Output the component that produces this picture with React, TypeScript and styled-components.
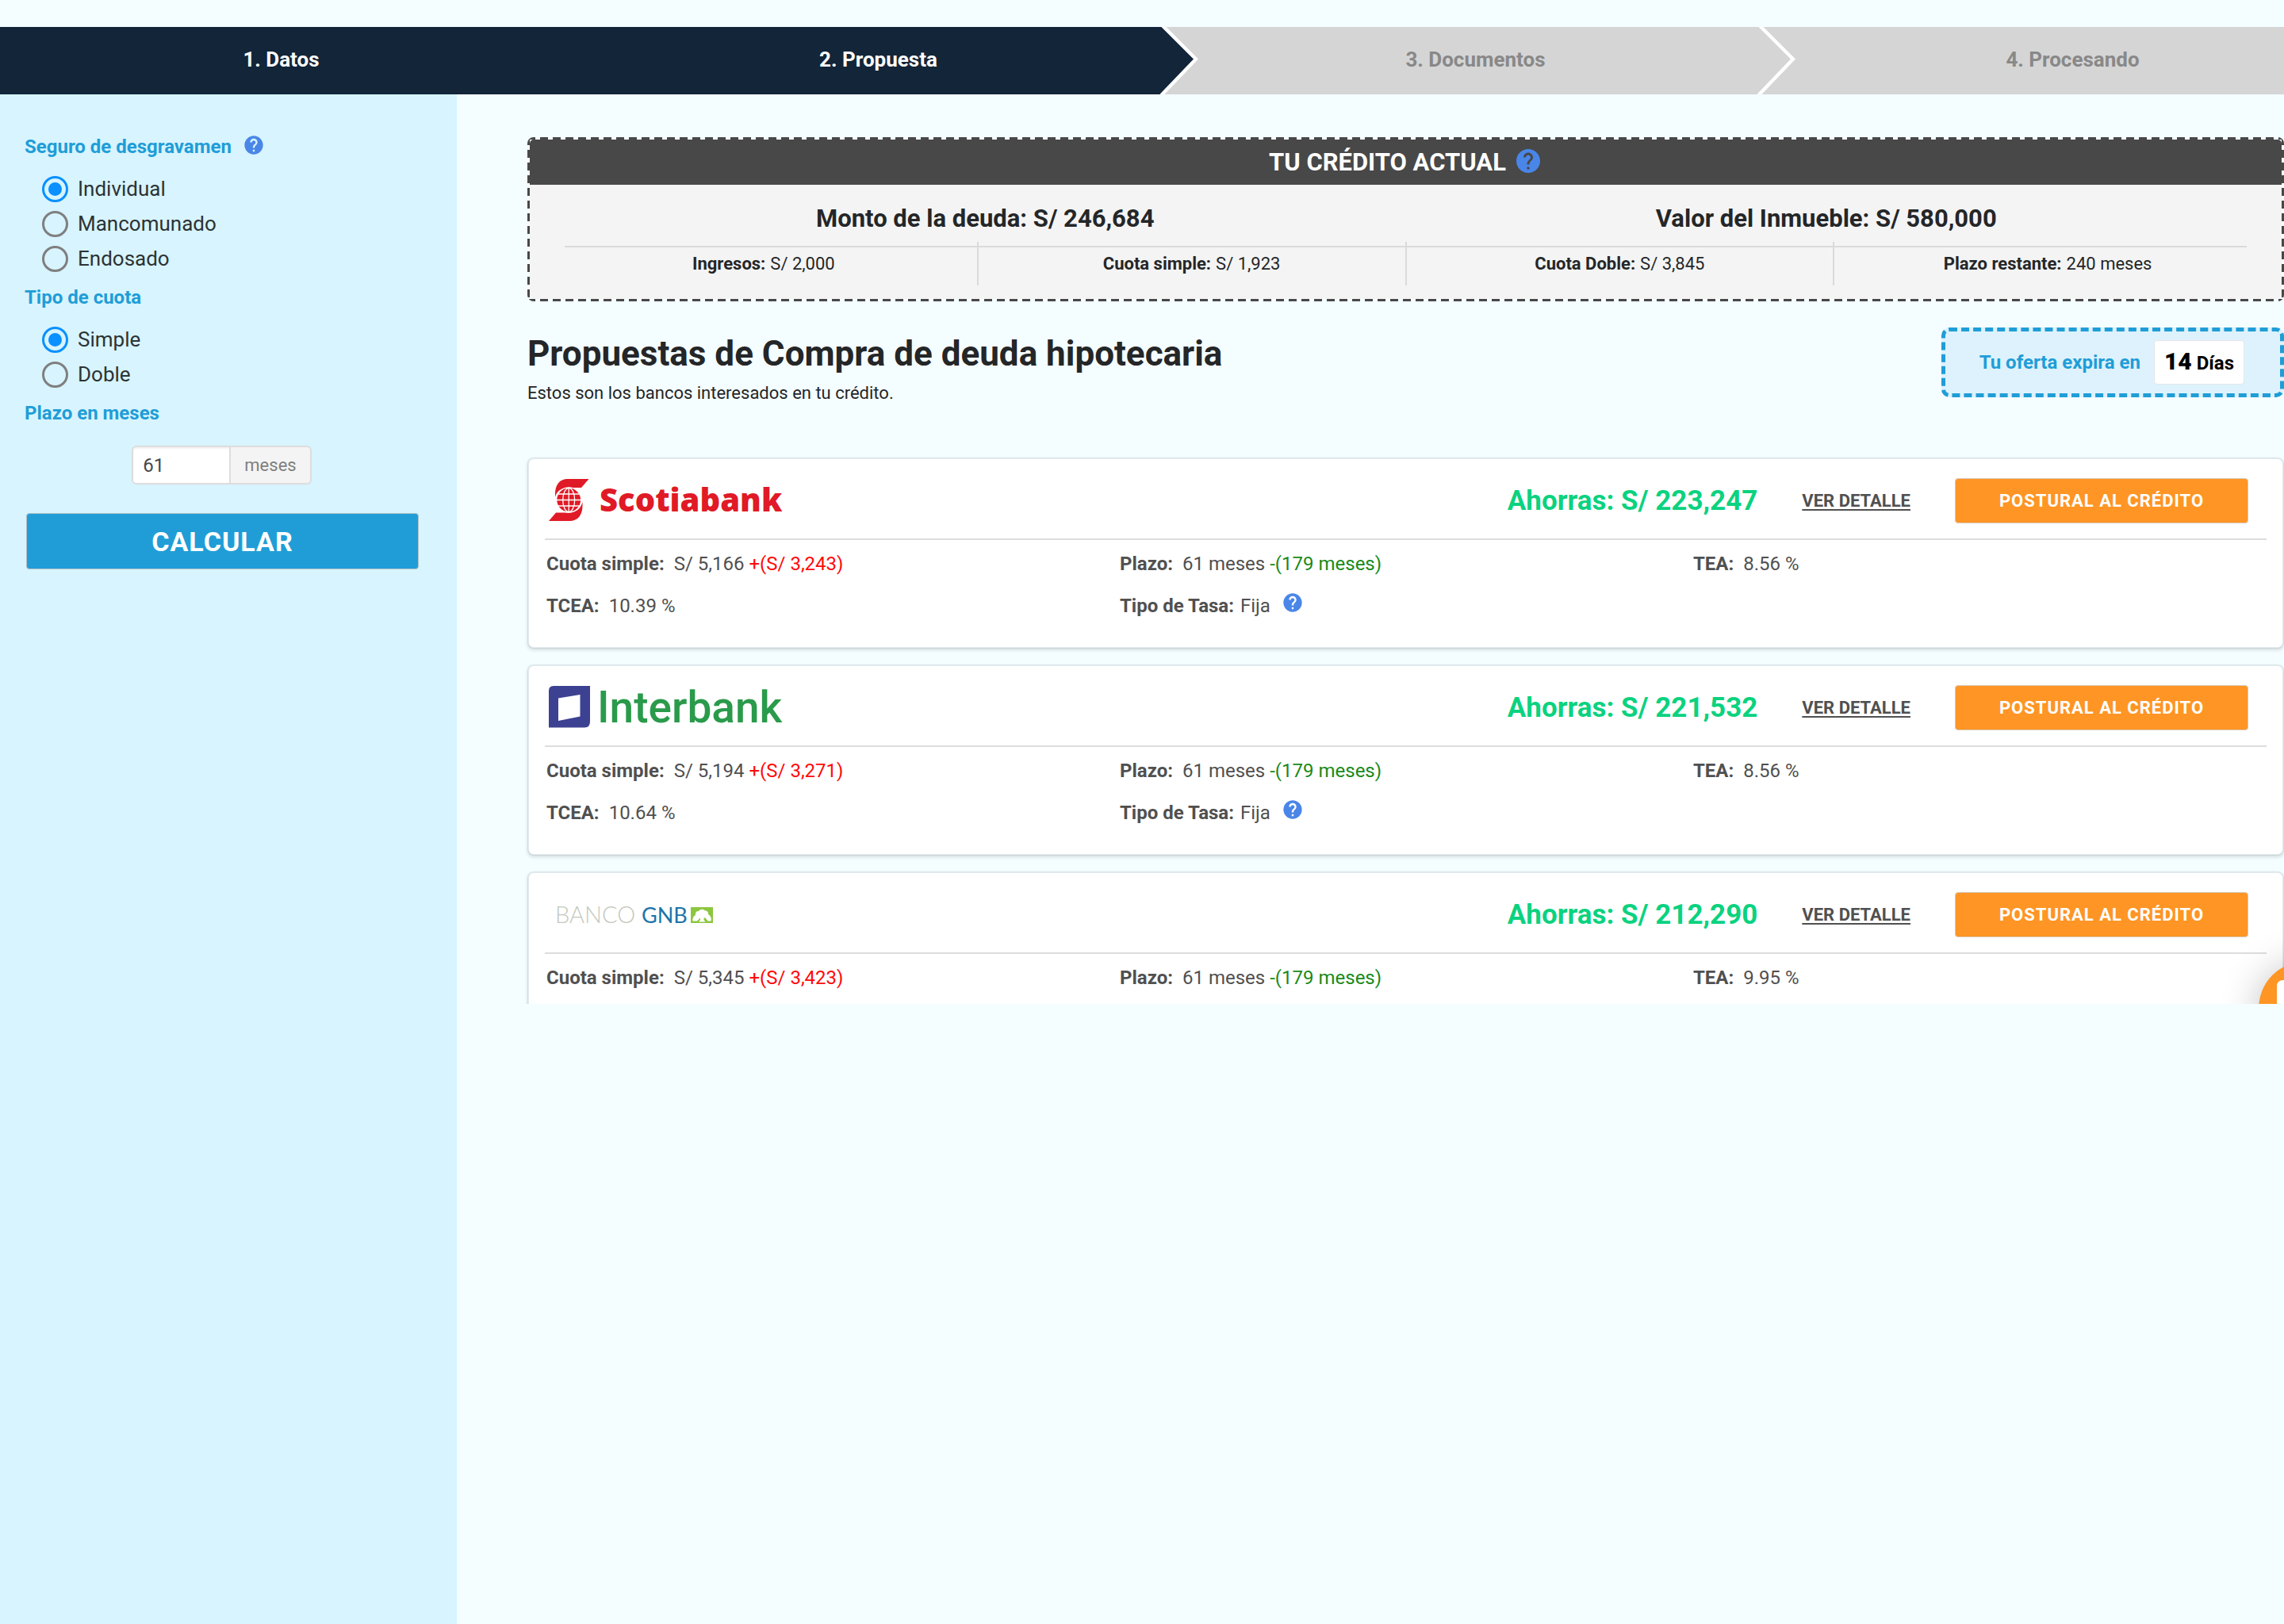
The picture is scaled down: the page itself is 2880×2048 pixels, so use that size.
import React from 'react';
import styled, { createGlobalStyle } from 'styled-components';
import { MdHelp } from 'react-icons/md';

const GlobalStyle = createGlobalStyle`
  *, *::before, *::after { box-sizing: border-box; }
  body {
    margin: 0;
    background: #f4fdff;
    color: #242628;
    font-family: Roboto, "Liberation Sans", sans-serif;
    overflow-x: hidden;
  }
  h1, h2, p, fieldset, legend, dl, dt, dd { margin: 0; padding: 0; border: 0; }
  button, input { font-family: inherit; }
`;

const navy = '#122539';
const silver = '#d5d5d5';
const brand = '#209dd7';
const slate = '#484848';

const Page = styled.div`
  min-height: 100vh;
  display: flex;
  flex-direction: column;
  padding-top: 34px;
  overflow: hidden;
`;

const StepBar = styled.nav`
  display: flex;
  height: 85px;
  width: calc(100% + 132px);
  font-size: 26px;
  font-weight: 700;
`;

const Step = styled.div<{ $done?: boolean }>`
  flex: 1 1 0;
  position: relative;
  display: flex;
  align-items: center;
  justify-content: center;
  padding-right: 44px;
  padding-bottom: 4px;
  background: ${(p) => (p.$done ? navy : silver)};
  color: ${(p) => (p.$done ? '#ffffff' : '#888888')};
`;

const StepTip = styled.svg`
  position: absolute;
  top: 0;
  right: -5px;
  z-index: 1;
`;

const Body = styled.div`
  flex: 1;
  display: flex;
  align-items: stretch;
`;

const Sidebar = styled.form`
  flex: 0 0 20%;
  background: #d7f4ff;
  padding: 51px 48px 48px 31px;
`;

const Group = styled.fieldset`
  min-width: 0;
  margin-bottom: 12px;
`;

const groupTitle = `
  font-size: 24px;
  line-height: 30px;
  font-weight: 700;
  color: ${brand};
`;

const GroupTitle = styled.legend`
  ${groupTitle}
  display: flex;
  align-items: center;
  gap: 14px;
  height: 30px;
  margin-bottom: 16px;
`;

const FieldTitle = styled.label`
  ${groupTitle}
  display: block;
`;

const HelpButton = styled.button<{ $size: number }>`
  flex: none;
  display: inline-flex;
  margin: 0 0 4px;
  padding: 0;
  border: 0;
  background: none;
  color: #4a86e8;
  svg {
    width: ${(p) => p.$size}px;
    height: ${(p) => p.$size}px;
  }
`;

const Option = styled.label`
  display: flex;
  align-items: center;
  gap: 12px;
  height: 44px;
  padding-left: 22px;
  font-size: 26px;
  color: #2c3335;
`;

const Radio = styled.input`
  appearance: none;
  width: 33px;
  height: 33px;
  margin: 0;
  border: 3px solid #7f7f7f;
  border-radius: 50%;
  display: grid;
  place-items: center;
  &:checked { border-color: #0a90ff; }
  &:checked::before {
    content: '';
    width: 17px;
    height: 17px;
    border-radius: 50%;
    background: #0a90ff;
  }
`;

const TermField = styled.div`
  display: flex;
  justify-content: center;
  height: 49px;
  margin: 26px 0 36px;
`;

const TermInput = styled.input`
  width: 125px;
  padding: 0 12px;
  border: 2px solid #dddddd;
  border-radius: 6px 0 0 6px;
  background: #ffffff;
  color: ${slate};
  font-size: 24px;
  box-shadow: inset 0 2px 2px rgba(0, 0, 0, 0.05);
`;

const TermUnit = styled.span`
  display: flex;
  align-items: center;
  padding: 0 17px;
  border: 2px solid #dddddd;
  border-left: 0;
  border-radius: 0 6px 6px 0;
  background: #f4f4f4;
  color: #808080;
  font-size: 22px;
`;

const CalcRow = styled.div`
  padding-left: 2px;
`;

const CalcButton = styled.button`
  display: block;
  width: 100%;
  height: 71px;
  border: 1px solid #b4c0c6;
  border-radius: 4px;
  background: ${brand};
  color: #ffffff;
  font-size: 34px;
  font-weight: 700;
  letter-spacing: 1px;
`;

const Main = styled.main`
  flex: 1;
  min-width: 0;
  height: 56vh;
  position: relative;
  overflow: hidden;
  padding: 54px 0 0 89px;
`;

const dashes = (angle: string) =>
  `repeating-linear-gradient(${angle}, ${slate} 0 10px, transparent 10px 16px)`;

const CreditBox = styled.section`
  border: 3px solid transparent;
  border-radius: 8px;
  background:
    linear-gradient(#f4f4f4, #f4f4f4) padding-box,
    ${dashes('90deg')} top / 100% 3px no-repeat border-box,
    ${dashes('90deg')} bottom / 100% 3px no-repeat border-box,
    ${dashes('180deg')} left / 3px 100% no-repeat border-box,
    ${dashes('180deg')} right / 3px 100% no-repeat border-box;
  padding-bottom: 17px;
`;

const CreditTitle = styled.h2`
  display: flex;
  align-items: center;
  justify-content: center;
  gap: 10px;
  height: 57px;
  border-radius: 5px 5px 0 0;
  background: ${slate};
  color: #ffffff;
  font-size: 31px;
  font-weight: 700;
`;

const CreditTotals = styled.div`
  display: flex;
  margin: 0 44px;
  padding: 23px 0 14px;
  border-bottom: 2px solid #dadada;
  font-size: 31px;
  line-height: 40px;
  font-weight: 700;
  text-align: center;
`;

const Total = styled.p`
  flex: 1 1 0;
`;

const CreditFacts = styled.dl`
  display: flex;
  margin: -7px 26px 0;
  font-size: 22px;
`;

const Fact = styled.div`
  flex: 1 1 0;
  display: flex;
  align-items: center;
  justify-content: center;
  gap: 6px;
  height: 55px;
  & + & { border-left: 2px solid #dadada; }
  dt { font-weight: 700; }
`;

const Intro = styled.header`
  display: flex;
  justify-content: space-between;
  align-items: flex-start;
  margin: 33px 0 67px;
`;

const IntroText = styled.div`
  padding-top: 7px;
  h1 {
    font-size: 44px;
    line-height: 52px;
    font-weight: 700;
  }
  p {
    margin-top: 10px;
    font-size: 22px;
    line-height: 28px;
  }
`;

const Expiry = styled.div`
  display: flex;
  align-items: center;
  gap: 17px;
  height: 88px;
  padding: 0 45px 0 43px;
  border: 5px dashed ${brand};
  border-radius: 10px;
  background: #ddf2fd;
  color: ${brand};
  font-size: 24px;
  font-weight: 700;
`;

const Days = styled.span`
  display: flex;
  align-items: baseline;
  gap: 6px;
  padding: 8px 12px;
  border: 1px solid #e6e6e6;
  border-radius: 4px;
  background: #ffffff;
  color: #000000;
  line-height: 36px;
  strong { font-size: 30px; }
`;

const Offers = styled.div`
  display: grid;
  gap: 20px;
`;

const Card = styled.article`
  min-height: 241px;
  padding: 0 20px;
  border: 2px solid rgba(34, 50, 56, 0.08);
  border-radius: 8px;
  background: #ffffff;
  background-clip: padding-box;
  box-shadow: 0 2px 4px rgba(34, 36, 38, 0.14);
`;

const CardHead = styled.div`
  display: flex;
  align-items: center;
  height: 102px;
  padding: 4px 23px 0 5px;
  border-bottom: 2px solid #dddddd;
  gap: 56px;
`;

const Brand = styled.div`
  margin-right: auto;
  svg { display: block; }
`;

const Saving = styled.strong`
  font-size: 35px;
  font-weight: 700;
  color: #0bd27f;
`;

const DetailLink = styled.a`
  font-size: 22px;
  font-weight: 700;
  color: #505050;
  text-decoration: underline;
  text-decoration-thickness: 2px;
  text-underline-offset: 3px;
`;

const ApplyButton = styled.button`
  width: 370px;
  height: 57px;
  border: 1px solid #d8c8b4;
  border-radius: 4px;
  background: #ff9524;
  color: #ffffff;
  font-size: 22px;
  font-weight: 700;
  letter-spacing: 1px;
`;

const Terms = styled.dl`
  display: grid;
  grid-template-columns: repeat(3, 1fr);
  padding: 3px 0 0 2px;
  font-size: 24px;
  color: #505050;
`;

const Term = styled.div<{ $tight?: boolean }>`
  display: flex;
  align-items: center;
  height: 53px;
  dt { font-weight: 700; }
  dd { margin-left: ${(p) => (p.$tight ? 8 : 12)}px; }
`;

const Diff = styled.span<{ $tone: 'up' | 'down' }>`
  margin-left: 6px;
  color: ${(p) => (p.$tone === 'up' ? '#ff0a0a' : '#1a8a1a')};
`;

const HelpSlot = styled.span`
  display: inline-flex;
  margin: 0 0 4px 14px;
`;

const ChatButton = styled.button`
  position: absolute;
  right: -88px;
  bottom: -66px;
  width: 120px;
  height: 120px;
  padding: 0;
  border: 0;
  border-radius: 50%;
  background: #ff9524;
  box-shadow: 0 4px 48px rgba(0, 0, 0, 0.25);
  display: grid;
  place-items: center;
`;

function Help({ label, size }: { label: string; size: number }) {
  return (
    <HelpButton type="button" aria-label={label} $size={size}>
      <MdHelp />
    </HelpButton>
  );
}

function Tip({ fill }: { fill: string }) {
  return (
    <StepTip width="48" height="85" viewBox="0 0 48 85" aria-hidden="true">
      <path d="M0 0H43V85H0Z" fill={silver} />
      <path d="M0 0H4L45 40.5L2 85H0Z" fill={fill} />
      <path d="M2.5 -2L45 40.5L0.5 87" fill="none" stroke="#ffffff" strokeWidth="4.4" />
    </StepTip>
  );
}

function ScotiabankLogo() {
  return (
    <svg width="300" height="72" viewBox="0 -8 300 72" role="img" aria-label="Scotiabank">
      <g fill="#e01a26">
        <path d="M50.5 1H24C13 1 8 9 8 20V24C10 16 16 12 25 12H41Z" />
        <path d="M0 54H26C37 54 42.5 46 42.5 35V30C40 39 34 43.5 25 43.5H9Z" />
        <circle cx="25.2" cy="27.5" r="15.5" />
      </g>
      <g fill="none" stroke="#ffffff" strokeWidth="1.3">
        <circle cx="25.2" cy="27.5" r="15.6" />
        <ellipse cx="25.2" cy="27.5" rx="7.500" ry="15" />
        <path d="M25.2 12V43M9.5 27.5H41M12 20H38.5M12 35H38.5" />
      </g>
      <text x="64" y="42" fill="#e01a26" fontFamily="'Open Sans', sans-serif" fontWeight="800" fontSize="40">
        Scotiabank
      </text>
    </svg>
  );
}

function InterbankLogo() {
  return (
    <svg width="300" height="72" viewBox="0 -8 300 72" role="img" aria-label="Interbank">
      <path
        d="M6 1H52V46Q52 53.5 45 53.5H0V7Q0 1 6 1ZM12 16.5V45L39.5 39.500V12Z"
        fill="#3c4192"
        fillRule="evenodd"
      />
      <text x="61" y="47" fill="#2a9a4b" fontFamily="Roboto, sans-serif" fontWeight="500" fontSize="55">
        Interbank
      </text>
    </svg>
  );
}

function GnbLogo() {
  return (
    <svg width="300" height="72" viewBox="0 -8 300 72" role="img" aria-label="Banco GNB">
      <text x="8" y="39" fill="#c3c8bc" fontFamily="Lato, sans-serif" fontWeight="300" fontSize="29">
        BANCO
      </text>
      <text x="117" y="39" fill="#1c74a8" fontFamily="Lato, sans-serif" fontWeight="400" fontSize="27">
        GNB
      </text>
      <rect x="179" y="19" width="28" height="20" fill="#8dc63f" />
      <path
        d="M181.5 36.5C181 32 183 30 185 29C184.5 25 187 23.5 189 24C190.5 21.5 195 21 197 23.5C200 23 201.5 26 201 28C204 29.5 205.5 33 204.5 36.5H200.500L197.5 32.5H195.5V35L197.5 37.5H189L191 35V32.5L187 36.5Z"
        fill="#ffffff"
      />
    </svg>
  );
}

type Item = { label: string; value: string; diff?: string; tone?: 'up' | 'down'; help?: boolean };
type Offer = { bank: string; logo: React.ReactNode; saving: string; items: Item[] };

const offers: Offer[] = [
  {
    bank: 'Scotiabank',
    logo: <ScotiabankLogo />,
    saving: '223,247',
    items: [
      { label: 'Cuota simple:', value: 'S/ 5,166', diff: '+(S/ 3,243)', tone: 'up' },
      { label: 'Plazo:', value: '61 meses', diff: '-(179 meses)', tone: 'down' },
      { label: 'TEA:', value: '8.56 %' },
      { label: 'TCEA:', value: '10.39 %' },
      { label: 'Tipo de Tasa:', value: 'Fija', help: true },
    ],
  },
  {
    bank: 'Interbank',
    logo: <InterbankLogo />,
    saving: '221,532',
    items: [
      { label: 'Cuota simple:', value: 'S/ 5,194', diff: '+(S/ 3,271)', tone: 'up' },
      { label: 'Plazo:', value: '61 meses', diff: '-(179 meses)', tone: 'down' },
      { label: 'TEA:', value: '8.56 %' },
      { label: 'TCEA:', value: '10.64 %' },
      { label: 'Tipo de Tasa:', value: 'Fija', help: true },
    ],
  },
  {
    bank: 'Banco GNB',
    logo: <GnbLogo />,
    saving: '212,290',
    items: [
      { label: 'Cuota simple:', value: 'S/ 5,345', diff: '+(S/ 3,423)', tone: 'up' },
      { label: 'Plazo:', value: '61 meses', diff: '-(179 meses)', tone: 'down' },
      { label: 'TEA:', value: '9.95 %' },
    ],
  },
];

const facts = [
  ['Ingresos:', 'S/ 2,000'],
  ['Cuota simple:', 'S/ 1,923'],
  ['Cuota Doble:', 'S/ 3,845'],
  ['Plazo restante:', '240 meses'],
];

function Options({ name, values }: { name: string; values: string[] }) {
  return (
    <>
      {values.map((v, i) => (
        <Option key={v}>
          <Radio type="radio" name={name} value={v} defaultChecked={i === 0} />
          {v}
        </Option>
      ))}
    </>
  );
}

export default function App() {
  return (
    <Page>
      <GlobalStyle />
      <StepBar>
        <Step $done>1. Datos</Step>
        <Step $done>
          2. Propuesta
          <Tip fill={navy} />
        </Step>
        <Step>
          3. Documentos
          <Tip fill={silver} />
        </Step>
        <Step>4. Procesando</Step>
      </StepBar>
      <Body>
        <Sidebar onSubmit={(e) => e.preventDefault()}>
          <Group>
            <GroupTitle>
              Seguro de desgravamen
              <Help label="Ayuda" size={28} />
            </GroupTitle>
            <Options name="seguro" values={['Individual', 'Mancomunado', 'Endosado']} />
          </Group>
          <Group>
            <GroupTitle>Tipo de cuota</GroupTitle>
            <Options name="cuota" values={['Simple', 'Doble']} />
          </Group>
          <FieldTitle htmlFor="plazo">Plazo en meses</FieldTitle>
          <TermField>
            <TermInput id="plazo" type="text" inputMode="numeric" defaultValue="61" />
            <TermUnit>meses</TermUnit>
          </TermField>
          <CalcRow>
            <CalcButton type="submit">CALCULAR</CalcButton>
          </CalcRow>
        </Sidebar>
        <Main>
          <CreditBox>
            <CreditTitle>
              TU CRÉDITO ACTUAL
              <Help label="Ayuda" size={36} />
            </CreditTitle>
            <CreditTotals>
              <Total>Monto de la deuda: S/ 246,684</Total>
              <Total>Valor del Inmueble: S/ 580,000</Total>
            </CreditTotals>
            <CreditFacts>
              {facts.map(([k, v]) => (
                <Fact key={k}>
                  <dt>{k}</dt>
                  <dd>{v}</dd>
                </Fact>
              ))}
            </CreditFacts>
          </CreditBox>
          <Intro>
            <IntroText>
              <h1>Propuestas de Compra de deuda hipotecaria</h1>
              <p>Estos son los bancos interesados en tu crédito.</p>
            </IntroText>
            <Expiry>
              Tu oferta expira en
              <Days>
                <strong>14</strong>Días
              </Days>
            </Expiry>
          </Intro>
          <Offers>
            {offers.map((o) => (
              <Card key={o.bank}>
                <CardHead>
                  <Brand>{o.logo}</Brand>
                  <Saving>Ahorras: S/ {o.saving}</Saving>
                  <DetailLink href="#detalle">VER DETALLE</DetailLink>
                  <ApplyButton type="button">POSTURAL AL CRÉDITO</ApplyButton>
                </CardHead>
                <Terms>
                  {o.items.map((t) => (
                    <Term key={t.label} $tight={t.help}>
                      <dt>{t.label}</dt>
                      <dd>
                        {t.value}
                        {t.diff && t.tone && <Diff $tone={t.tone}>{t.diff}</Diff>}
                      </dd>
                      {t.help && (
                        <HelpSlot>
                          <Help label="Ayuda" size={28} />
                        </HelpSlot>
                      )}
                    </Term>
                  ))}
                </Terms>
              </Card>
            ))}
          </Offers>
          <ChatButton type="button" aria-label="Chat">
            <svg width="74" height="72" viewBox="0 0 74 72" aria-hidden="true">
              <path d="M8 0H66Q74 0 74 8V50Q74 58 66 58H34L16 72V58H8Q0 58 0 50V8Q0 0 8 0Z" fill="#ffffff" />
            </svg>
          </ChatButton>
        </Main>
      </Body>
    </Page>
  );
}
